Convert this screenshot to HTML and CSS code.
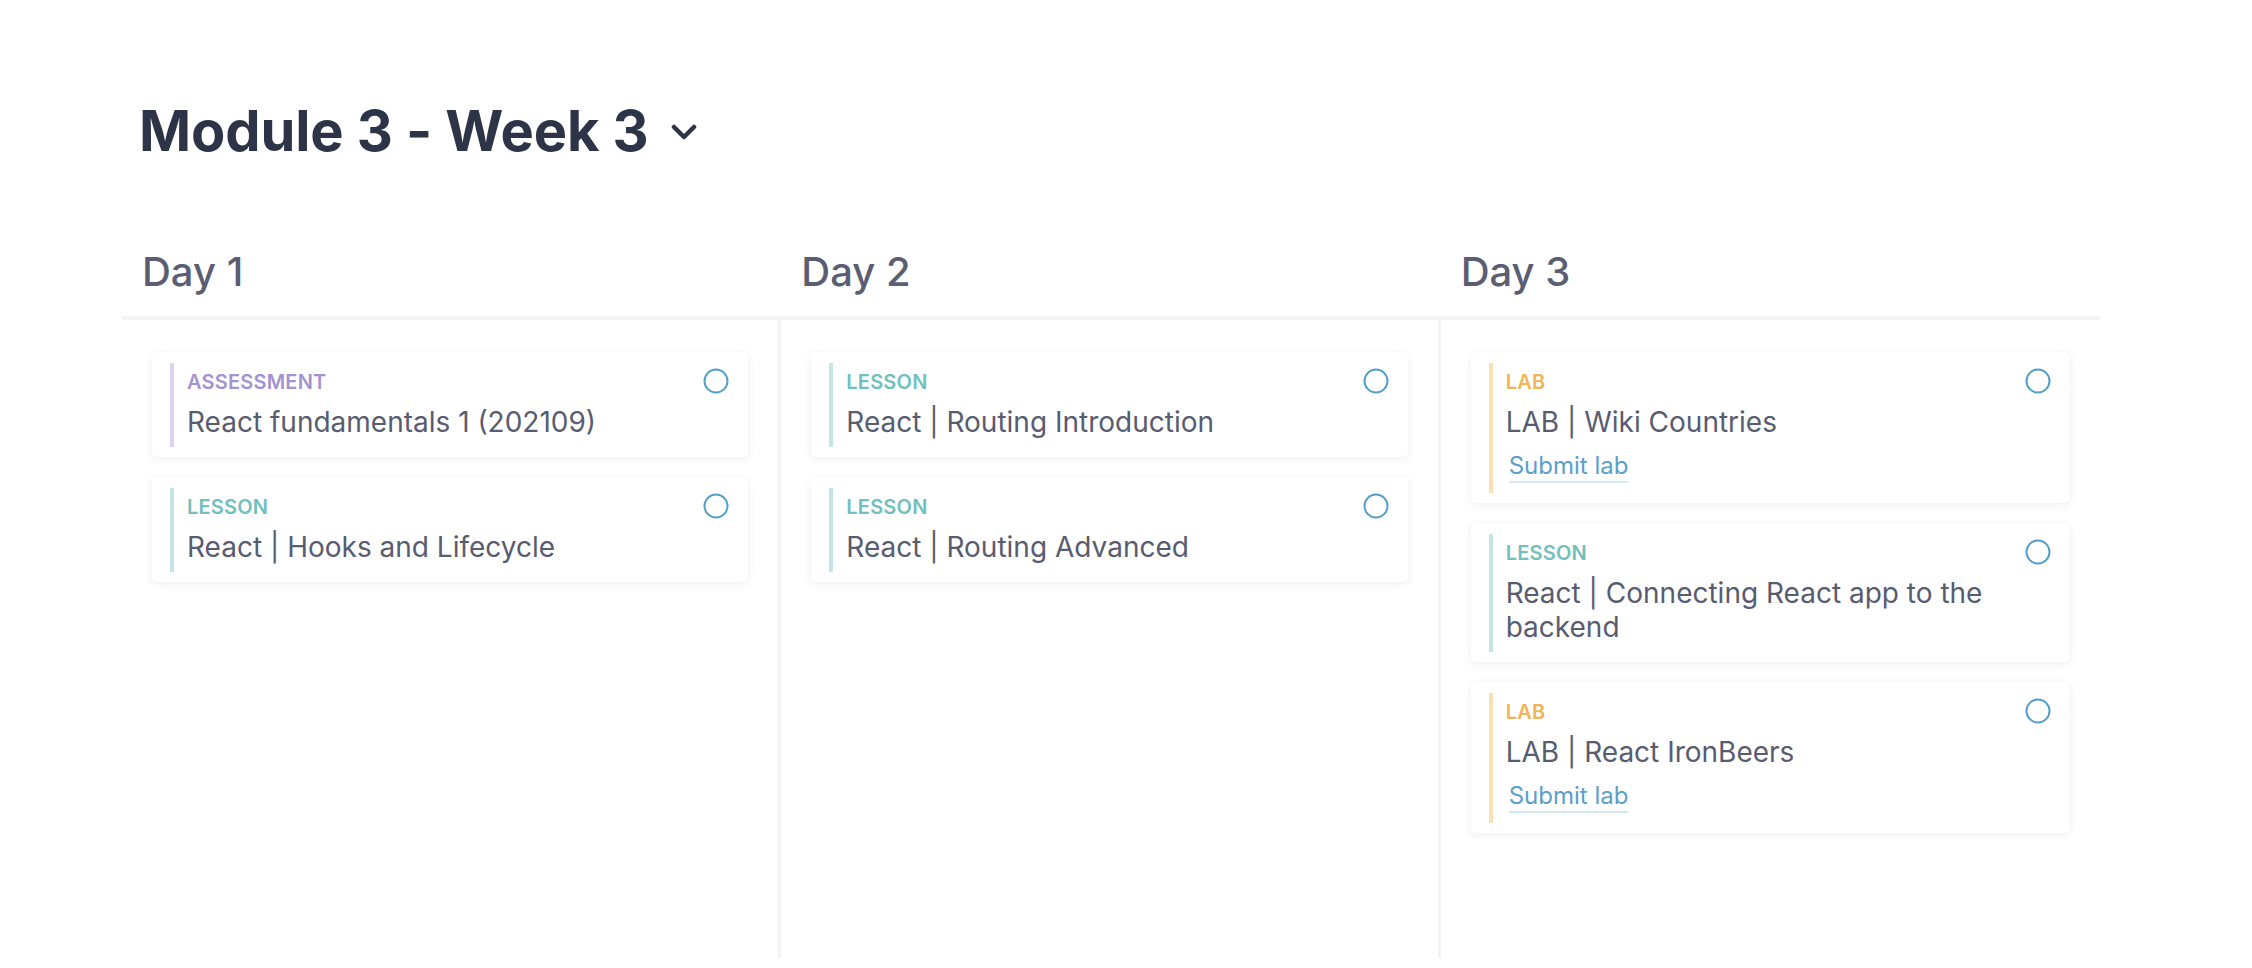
FILE: index.html
```html
<!DOCTYPE html>
<html lang="en">
<head>
<meta charset="utf-8">
<title>Module 3 - Week 3</title>
<link rel="stylesheet" href="styles.css">
</head>
<body>
<main class="page">
  <header class="week-header">
    <h1 class="week-title">Module 3 - Week 3</h1>
    <svg class="chevron" width="26" height="16" viewBox="0 0 26 16" aria-hidden="true">
      <polyline points="3,3 13,13 23,3" fill="none" stroke="#2e3448" stroke-width="4.5" stroke-linecap="round" stroke-linejoin="round"/>
    </svg>
  </header>

  <section class="days">
    <div class="day">
      <h2 class="day-title">Day 1</h2>
      <div class="day-body divided">
        <article class="card">
          <div class="card-content assessment">
            <div class="card-label">ASSESSMENT</div>
            <div class="card-title">React fundamentals 1 (202109)</div>
          </div>
          <svg class="status" width="26" height="26" viewBox="0 0 26 26"><circle cx="13" cy="13" r="11.5" fill="none" stroke="#529fca" stroke-width="2"/></svg>
        </article>
        <article class="card">
          <div class="card-content lesson">
            <div class="card-label">LESSON</div>
            <div class="card-title">React | Hooks and Lifecycle</div>
          </div>
          <svg class="status" width="26" height="26" viewBox="0 0 26 26"><circle cx="13" cy="13" r="11.5" fill="none" stroke="#529fca" stroke-width="2"/></svg>
        </article>
      </div>
    </div>

    <div class="day">
      <h2 class="day-title">Day 2</h2>
      <div class="day-body divided">
        <article class="card">
          <div class="card-content lesson">
            <div class="card-label">LESSON</div>
            <div class="card-title">React | Routing Introduction</div>
          </div>
          <svg class="status" width="26" height="26" viewBox="0 0 26 26"><circle cx="13" cy="13" r="11.5" fill="none" stroke="#529fca" stroke-width="2"/></svg>
        </article>
        <article class="card">
          <div class="card-content lesson">
            <div class="card-label">LESSON</div>
            <div class="card-title">React | Routing Advanced</div>
          </div>
          <svg class="status" width="26" height="26" viewBox="0 0 26 26"><circle cx="13" cy="13" r="11.5" fill="none" stroke="#529fca" stroke-width="2"/></svg>
        </article>
      </div>
    </div>

    <div class="day">
      <h2 class="day-title">Day 3</h2>
      <div class="day-body">
        <article class="card">
          <div class="card-content lab">
            <div class="card-label">LAB</div>
            <div class="card-title">LAB | Wiki Countries</div>
            <a class="submit-link" href="#">Submit lab</a>
          </div>
          <svg class="status" width="26" height="26" viewBox="0 0 26 26"><circle cx="13" cy="13" r="11.5" fill="none" stroke="#529fca" stroke-width="2"/></svg>
        </article>
        <article class="card">
          <div class="card-content lesson">
            <div class="card-label">LESSON</div>
            <div class="card-title">React | Connecting React app to the backend</div>
          </div>
          <svg class="status" width="26" height="26" viewBox="0 0 26 26"><circle cx="13" cy="13" r="11.5" fill="none" stroke="#529fca" stroke-width="2"/></svg>
        </article>
        <article class="card">
          <div class="card-content lab">
            <div class="card-label">LAB</div>
            <div class="card-title">LAB | React IronBeers</div>
            <a class="submit-link" href="#">Submit lab</a>
          </div>
          <svg class="status" width="26" height="26" viewBox="0 0 26 26"><circle cx="13" cy="13" r="11.5" fill="none" stroke="#529fca" stroke-width="2"/></svg>
        </article>
      </div>
    </div>
  </section>
</main>
</body>
</html>
```

FILE: styles.css
```css
* {
  box-sizing: border-box;
}

html, body {
  margin: 0;
  padding: 0;
  background: #ffffff;
}

body {
  font-family: Inter, "Noto Sans", "Liberation Sans", sans-serif;
  color: #565a6e;
}

.page {
  padding: 96px 152px 10px 122px;
  height: 968px;
  display: flex;
  flex-direction: column;
}

.week-header {
  display: flex;
  align-items: center;
  padding-left: 17px;
}

.week-title {
  margin: 0;
  font-size: 56px;
  line-height: 70px;
  font-weight: 700;
  color: #2e3448;
  letter-spacing: -0.1px;
}

.chevron {
  margin-left: 22px;
  margin-top: 2px;
}

.days {
  margin-top: 82px;
  display: grid;
  grid-template-columns: repeat(3, 1fr);
  flex: 1;
}

.day {
  display: flex;
  flex-direction: column;
}

.day-title {
  margin: 0;
  padding: 0 20px 20px 20px;
  font-size: 40px;
  line-height: 48px;
  font-weight: 500;
  color: #5b5e72;
  border-bottom: 4px solid #f3f4f6;
}

.day-body {
  flex: 1;
  padding: 32px 30px 0 30px;
  display: flex;
  flex-direction: column;
  gap: 20px;
}

.day-body.divided {
  border-right: 3px solid #f3f4f6;
}

.card {
  display: flex;
  align-items: flex-start;
  background: #ffffff;
  border-radius: 5px;
  box-shadow: 0 2px 10px rgba(40, 45, 70, 0.07), 0 0 2px rgba(40, 45, 70, 0.04);
  padding: 11px 19px 10px 18px;
}

.card-content {
  flex: 1;
  border-left: 4px solid #c4e5e5;
  padding: 6px 0 8px 13px;
  display: flex;
  flex-direction: column;
  align-items: flex-start;
}

.card-label {
  font-size: 20px;
  line-height: 26px;
  font-weight: 600;
  letter-spacing: 0.2px;
}

.card-title {
  margin-top: 10px;
  font-size: 28px;
  line-height: 34px;
  font-weight: 400;
  color: #585c70;
}

.submit-link {
  margin-top: 12px;
  margin-bottom: 2px;
  margin-left: 3px;
  font-size: 24px;
  line-height: 30px;
  color: #5aa0c9;
  text-decoration: none;
  border-bottom: 2px solid #d4e9f2;
}

.status {
  flex: none;
  margin-top: 5px;
}

.assessment {
  border-left-color: #dcd3ef;
}

.assessment .card-label {
  color: #a493d2;
}

.lesson {
  border-left-color: #c4e5e5;
}

.lesson .card-label {
  color: #72bfbd;
}

.lab {
  border-left-color: #f8e0b4;
}

.lab .card-label {
  color: #f0b557;
}
```
